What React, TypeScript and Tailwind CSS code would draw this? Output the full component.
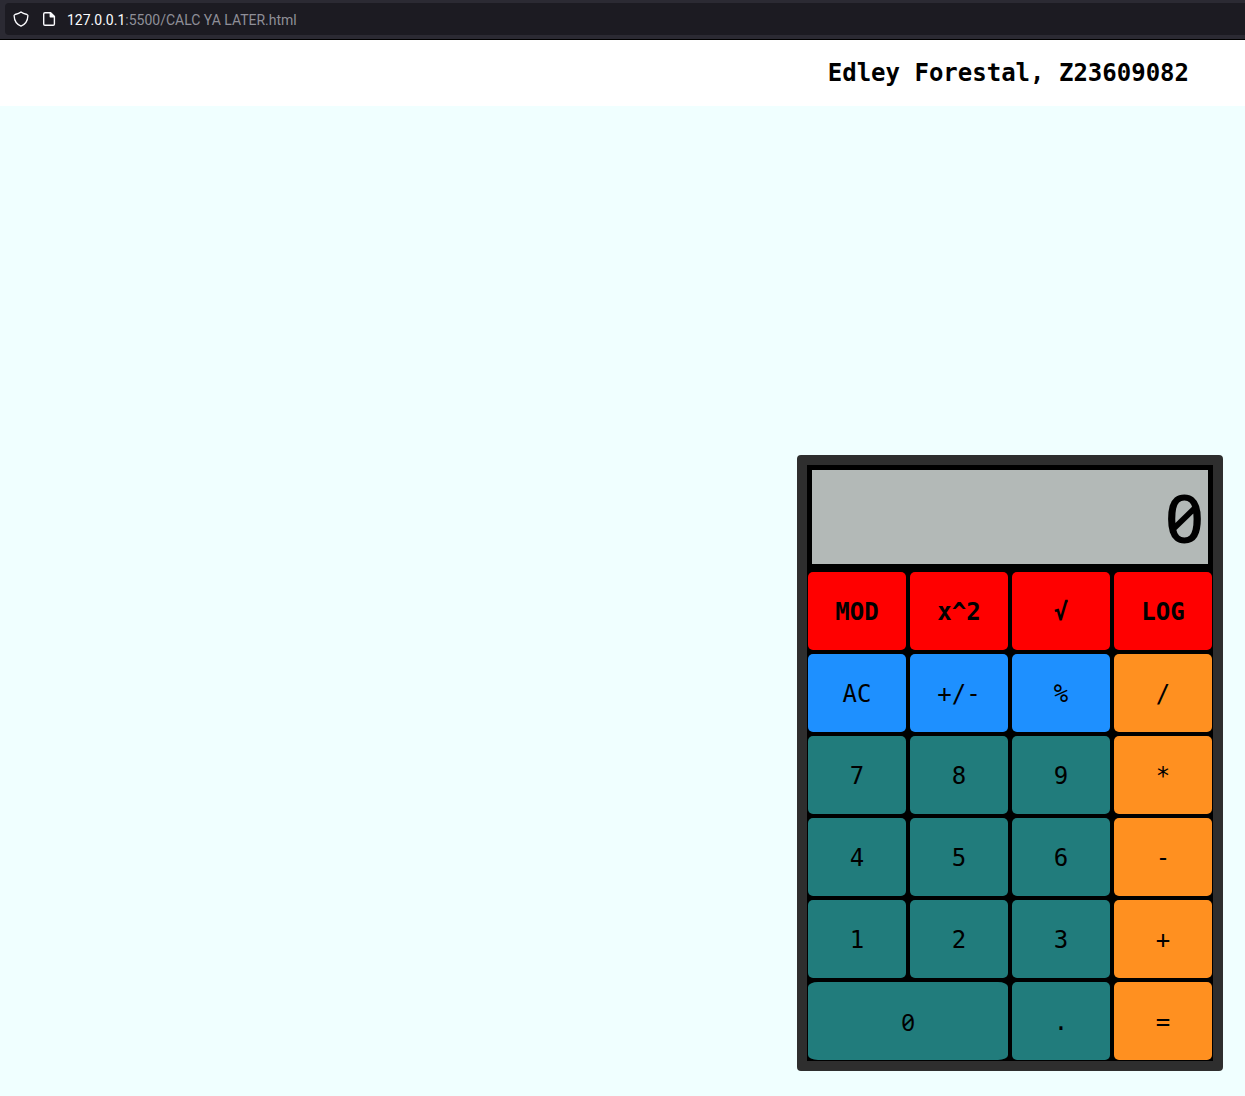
import React, { useState } from "react";

type Key = { label: string; tone: "fn" | "util" | "digit" | "op"; wide?: boolean };

const keys: Key[] = [
  { label: "MOD", tone: "fn" },
  { label: "x^2", tone: "fn" },
  { label: "√", tone: "fn" },
  { label: "LOG", tone: "fn" },
  { label: "AC", tone: "util" },
  { label: "+/-", tone: "util" },
  { label: "%", tone: "util" },
  { label: "/", tone: "op" },
  { label: "7", tone: "digit" },
  { label: "8", tone: "digit" },
  { label: "9", tone: "digit" },
  { label: "*", tone: "op" },
  { label: "4", tone: "digit" },
  { label: "5", tone: "digit" },
  { label: "6", tone: "digit" },
  { label: "-", tone: "op" },
  { label: "1", tone: "digit" },
  { label: "2", tone: "digit" },
  { label: "3", tone: "digit" },
  { label: "+", tone: "op" },
  { label: "0", tone: "digit", wide: true },
  { label: ".", tone: "digit" },
  { label: "=", tone: "op" },
];

const tones = {
  fn: "bg-[#ff0000] font-bold",
  util: "bg-[#1e90ff]",
  digit: "bg-[#217c7c]",
  op: "bg-[#ff9020]",
};

function ShieldIcon() {
  return (
    <svg className="size-4" viewBox="0 0 16 16" fill="none" stroke="#fbfbfe" strokeWidth="1.3" strokeLinejoin="round" aria-hidden="true">
      <path d="M8 0.9 C6.6 2.1 4 3 2 3.5 C1.4 3.7 1.1 4 1.1 4.6 C1.3 9.6 3.8 13.4 8 15.1 C12.2 13.4 14.7 9.6 14.9 4.6 C14.9 4 14.6 3.7 14 3.5 C12 3 9.4 2.1 8 0.9 Z" />
    </svg>
  );
}

function PageIcon() {
  return (
    <svg className="size-4" viewBox="0 0 16 16" fill="none" stroke="#fbfbfe" strokeWidth="1.4" strokeLinejoin="round" aria-hidden="true">
      <path d="M4 1.7 H9.5 L13.4 5.6 V13 Q13.4 14.3 12.1 14.3 H4 Q2.7 14.3 2.7 13 V3 Q2.7 1.7 4 1.7 Z" />
      <path d="M9.3 1.7 V5.8 H13.4 Z" fill="#fbfbfe" />
    </svg>
  );
}

export default function App() {
  const [display, setDisplay] = useState("0");

  const press = (label: string) => {
    if (label === "AC") setDisplay("0");
    else if (/^\d$/.test(label)) setDisplay((d) => (d === "0" ? label : (d + label).slice(0, 9)));
    else if (label === ".") setDisplay((d) => (d.includes(".") ? d : d + "."));
    else if (label === "+/-") setDisplay((d) => String(-Number(d) || 0));
  };

  return (
    <div className="flex min-h-screen flex-col bg-[#f0ffff] font-['DejaVu_Sans_Mono',monospace] text-black">
      <div className="border-b border-black bg-[#2b2a33] pt-[3px] pb-1 pl-[5px]">
        <div className="flex h-8 items-center rounded-l bg-[#1c1b22] pl-2">
          <ShieldIcon />
          <span className="ml-3">
            <PageIcon />
          </span>
          <p className="ml-[10px] pt-0.5 font-[Roboto,sans-serif] text-sm text-[#8f8f98]">
            <span className="text-[#fbfbfe]">127.0.0.1</span>:5500/CALC YA LATER.html
          </p>
        </div>
      </div>
      <header className="bg-white py-[17px] pr-14 text-right">
        <h1 className="text-2xl leading-8 font-bold">Edley Forestal, Z23609082</h1>
      </header>
      <main className="flex grow items-end justify-end pr-[22px] pb-[25px]">
        <section aria-label="Calculator" className="rounded border-10 border-[#2e2e2e] bg-black">
          <output className="flex h-[104px] items-center justify-end border-5 border-black bg-[#b3b9b7] pr-1 font-['Noto_Sans',sans-serif] text-[68px] leading-none font-medium slashed-zero">
            {display}
          </output>
          <div className="mt-0.5 grid grid-cols-[repeat(4,98px)] gap-1 p-px">
            {keys.map((k) => (
              <button
                key={k.label}
                type="button"
                onClick={() => press(k.label)}
                className={`h-[78px] pt-0.5 text-2xl ${tones[k.tone]} ${k.wide ? "col-span-2 rounded-[10px/5px] font-['Noto_Sans',sans-serif] slashed-zero" : "rounded-[5px]"}`}
              >
                {k.label}
              </button>
            ))}
          </div>
        </section>
      </main>
    </div>
  );
}
